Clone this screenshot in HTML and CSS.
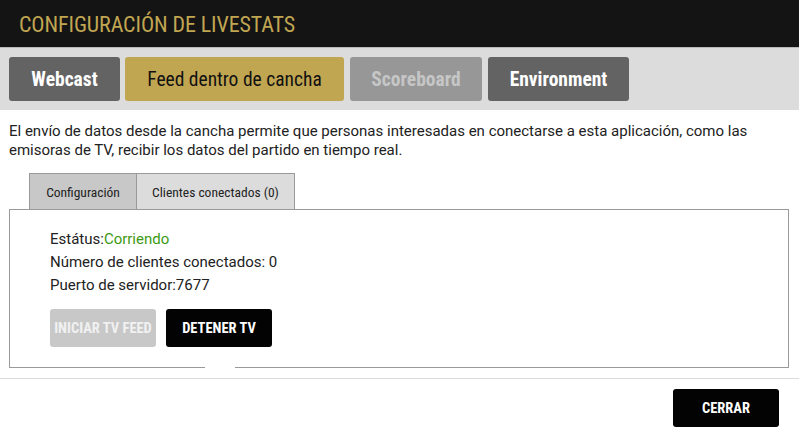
FILE: index.html
```html
<!DOCTYPE html>
<html lang="es">
<head>
<meta charset="utf-8">
<link rel="stylesheet" href="styles.css">
</head>
<body>
<div class="dialog">
  <header class="head"><h1 class="title">CONFIGURACIÓN DE LIVESTATS</h1></header>
  <nav class="menu">
    <button class="mbtn mbtn-dark">Webcast</button>
    <button class="mbtn mbtn-gold">Feed dentro de cancha</button>
    <button class="mbtn mbtn-off">Scoreboard</button>
    <button class="mbtn mbtn-dark mbtn-env">Environment</button>
  </nav>
  <p class="desc">El envío de datos desde la cancha permite que personas interesadas en conectarse a esta aplicación, como las emisoras de TV, recibir los datos del partido en tiempo real.</p>
  <div class="tabs">
    <div class="tab tab-active">Configuración</div>
    <div class="tab">Clientes conectados (0)</div>
  </div>
  <section class="panel">
    <div class="line">Estátus:<span class="ok">Corriendo</span></div>
    <div class="line">Número de clientes conectados: 0</div>
    <div class="line">Puerto de servidor:7677</div>
    <div class="actions">
      <button class="abtn abtn-off">INICIAR TV FEED</button>
      <button class="abtn">DETENER TV</button>
    </div>
    <span class="gap"></span>
  </section>
  <footer class="foot">
    <button class="abtn">CERRAR</button>
  </footer>
</div>
</body>
</html>
```

FILE: styles.css
```css
* { box-sizing: border-box; }
html, body { margin: 0; padding: 0; background: #fff; }
body { width: 799px; height: 436px; overflow: hidden; font-family: Roboto, "Liberation Sans", sans-serif; color: #222; }
.dialog { display: flex; flex-direction: column; }
.head { height: 48px; background: #141414; border-bottom: 1px solid #b9b9b9; display: flex; align-items: center; padding-left: 19px; }
.title { margin: 0; font-family: "Roboto Condensed", "Liberation Sans Narrow", "DejaVu Sans Condensed", sans-serif; font-weight: 400; font-size: 22px; color: #c1a652; letter-spacing: -0.1px; padding-top: 1px; }
.menu { background: #dcdcdc; height: 62px; display: flex; align-items: flex-start; padding: 9px 0 0 9px; gap: 5px; }
.mbtn { border: 0; border-radius: 3px; height: 44px; font-family: "Roboto Condensed", "Liberation Sans Narrow", "DejaVu Sans Condensed", sans-serif; font-size: 19.5px; font-weight: 700; padding: 0; cursor: pointer; }
.mbtn-dark { background: #636363; color: #fff; width: 111px; }
.mbtn-env { width: 141px; margin-left: 1px; }
.mbtn-gold { background: #c1a652; color: #111; font-weight: 400; width: 219px; }
.mbtn-off { background: #979797; color: #c6c6c6; width: 132px; margin-left: 1px; }
.desc { margin: 12px 0 0 9px; font-size: 15px; line-height: 19px; width: 782px; }
.tabs { display: flex; margin: 13px 0 0 29px; height: 36px; }
.tab { border: 1px solid #9a9a9a; border-bottom: 0; background: #dcdcdc; font-family: "Roboto Condensed", "Liberation Sans Narrow", "DejaVu Sans Condensed", sans-serif; font-size: 13.5px; color: #222; display: flex; align-items: center; justify-content: center; width: 159px; }
.tab-active { background: #c8c8c8; width: 107px; border-right: 0; }
.panel { position: relative; margin: 0 10px 0 9px; border: 1px solid #9a9a9a; height: 159px; padding: 18px 0 0 40px; }
.line { font-size: 15px; line-height: 23px; }
.ok { color: #3d9a12; }
.actions { display: flex; gap: 10px; margin-top: 12px; }
.abtn { border: 0; border-radius: 3px; background: #030303; color: #fff; width: 106px; height: 38px; font-family: "Roboto Condensed", "Liberation Sans Narrow", "DejaVu Sans Condensed", sans-serif; font-weight: 700; font-size: 14.5px; padding: 0; }
.abtn-off { background: #c8c8c8; color: #f1f1f1; }
.gap { position: absolute; left: 195px; bottom: -1px; width: 30px; height: 1px; background: #fff; }
.foot { margin-top: 10px; border-top: 1px solid #dcdcdc; height: 59px; display: flex; justify-content: flex-end; align-items: flex-start; padding: 10px 20px 0 0; }
```
